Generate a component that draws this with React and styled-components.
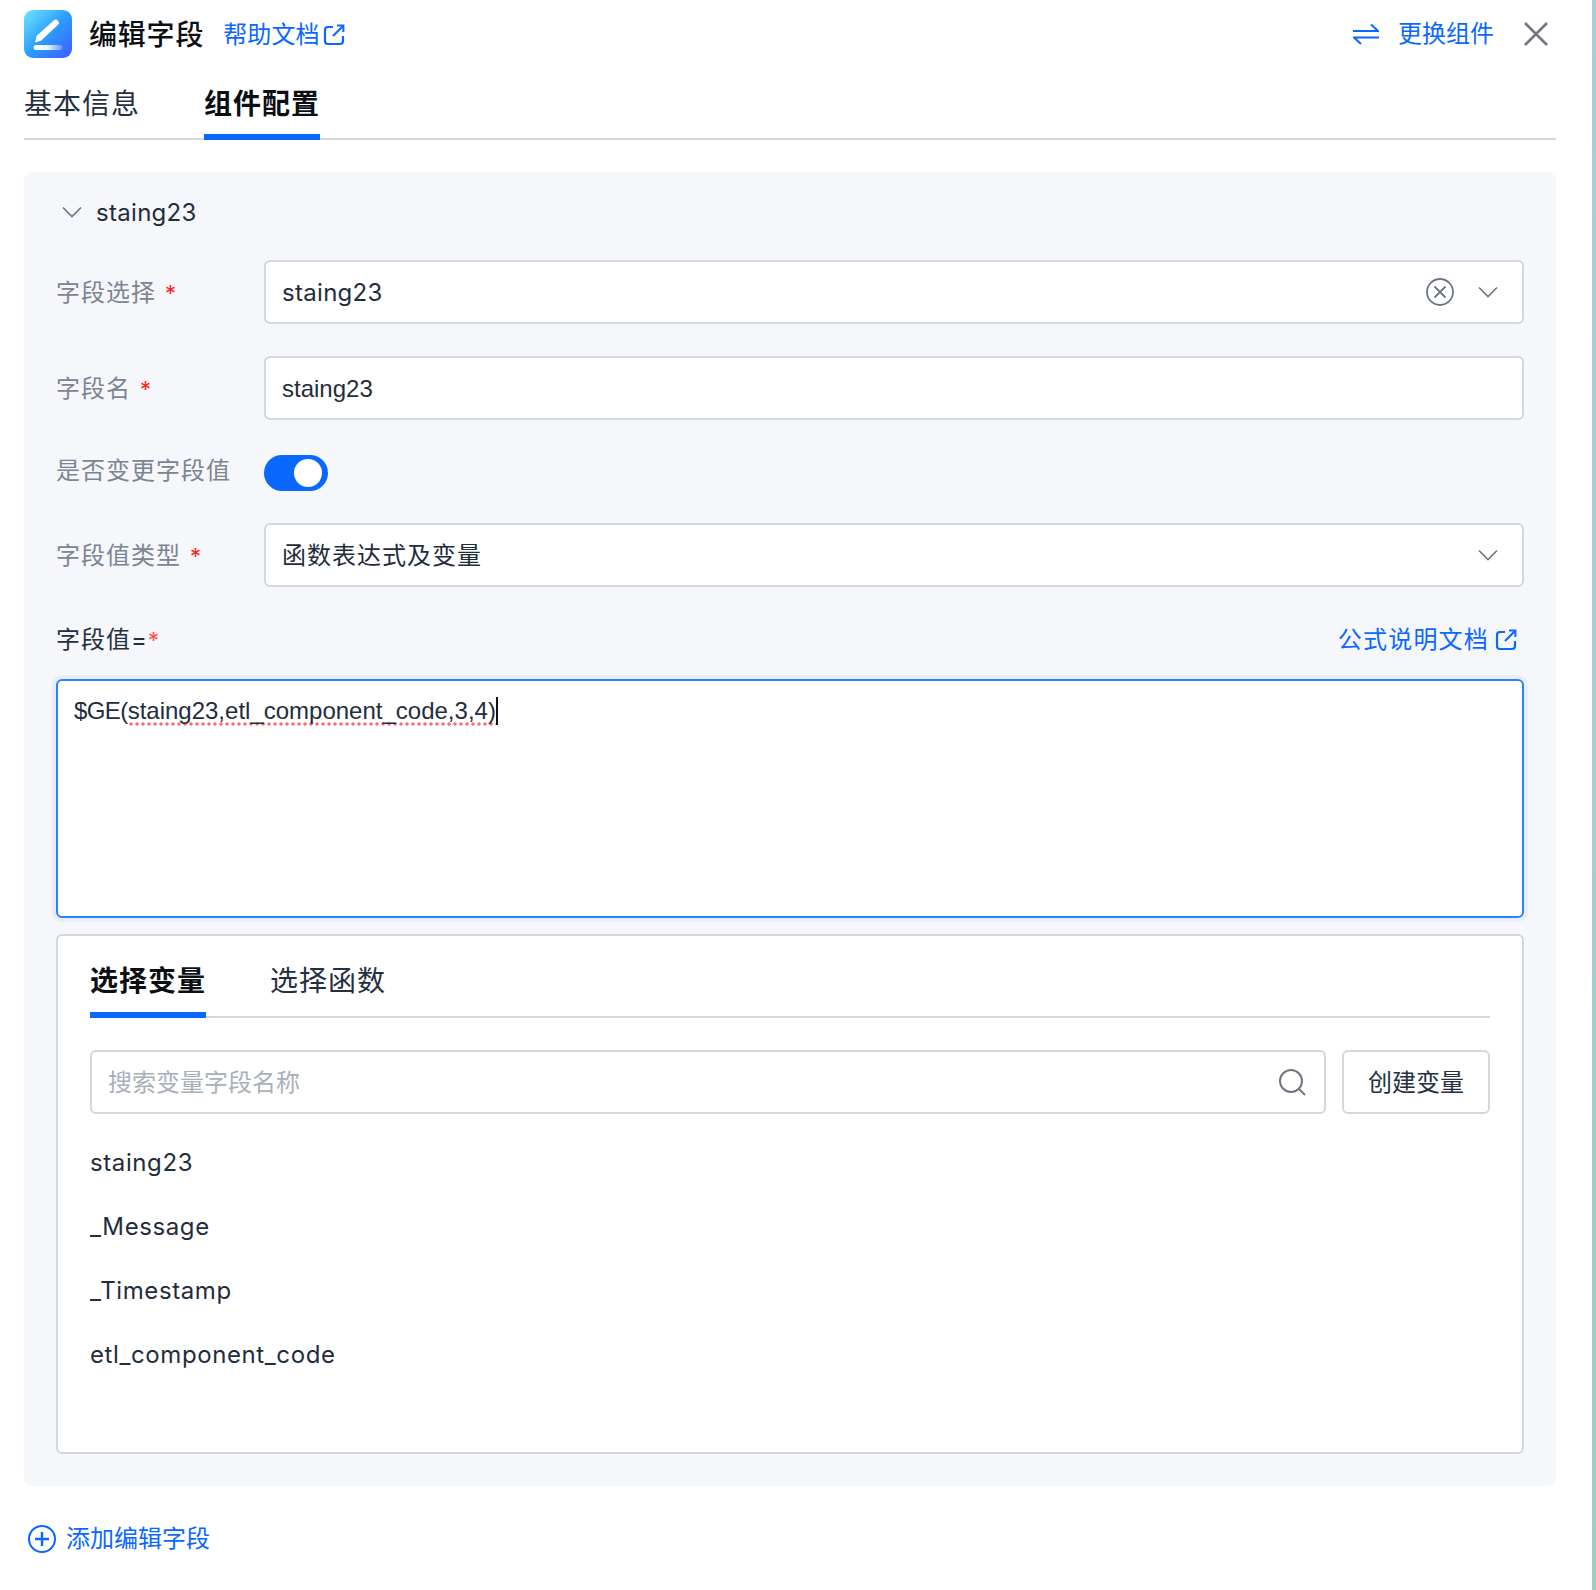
import React from 'react';
import styled, { createGlobalStyle } from 'styled-components';

const Global = createGlobalStyle`
  html, body { margin: 0; padding: 0; background: #fff; }
  * { box-sizing: border-box; }
  body { font-family: Inter, "Noto Sans CJK SC", sans-serif; color: #1f2d3d; }
`;

const BLUE = '#0b68ff';

const Page = styled.div`display: flex; width: 1596px; height: 1590px; overflow: hidden;`;
const Main = styled.div`width: 1592px; padding: 0 36px 0 24px; display: flex; flex-direction: column;`;
const Strip = styled.div`width: 4px; background: linear-gradient(180deg, #a9cdd9 0%, #a3cfd0 50%, #9ccfc2 100%);`;

const Header = styled.header`display: flex; align-items: center; height: 68px;`;
const Title = styled.h1`margin: 2px 0 0 17px; font-size: 28px; line-height: 40px; font-weight: 500; color: #0b0f14; letter-spacing: .8px;`;
const HelpLink = styled.a`display: inline-flex; align-items: center; gap: 3px; margin: 2px 0 0 19px; font-size: 24px; line-height: 34px; color: ${BLUE}; letter-spacing: .1px;`;
const HeaderRight = styled.div`margin-left: auto; padding-right: 8px; display: flex; align-items: center;`;
const SwapLabel = styled.span`font-size: 24px; line-height: 34px; color: ${BLUE}; margin-left: 19px;`;
const CloseBtn = styled.span`display: flex; margin-left: 30px; color: #6f7782;`;

const TabBar = styled.div`display: flex; gap: 64px; height: ${p => p.$h}px; border-bottom: 2px solid #d2d7e0; align-items: flex-start;`;
const Tab = styled.div`
  position: relative;
  height: ${p => p.$h}px;
  padding-top: ${p => p.$pt}px;
  font-size: 28px;
  line-height: 40px;
  letter-spacing: 1px;
  font-weight: ${p => p.$active ? 600 : 400};
  color: ${p => p.$active ? '#0b0f14' : '#24303f'};
  &::after {
    content: '';
    display: ${p => p.$active ? 'block' : 'none'};
    position: absolute;
    left: 0; right: 0; bottom: 0;
    height: 6px;
    background: ${BLUE};
  }
`;

const Panel = styled.section`margin-top: 32px; height: 1314px; background: #f5f7fb; border-radius: 8px; padding: 0 32px;`;
const GroupHead = styled.div`display: flex; align-items: center; height: 88px; padding: 0 0 8px 6px; gap: 14px; font-size: 24px; letter-spacing: .3px; color: #1f2d3d;`;

const Row = styled.div`display: flex; align-items: center; margin-top: ${p => p.$mt || 0}px; height: ${p => p.$h || 64}px;`;
const Label = styled.label`width: 208px; flex: none; margin: ${p => p.$raised ? '0 0 4px' : '2px 0 0'}; font-size: 24px; line-height: 34px; color: #7c8591; letter-spacing: 1px;`;
const Req = styled.span`color: #ff2020; margin-left: 9px; font-size: 22px;`;
const Field = styled.div`
  flex: 1; height: 64px; display: flex; align-items: center; justify-content: space-between;
  background: #fff; border: 2px solid #d2d7e0; border-radius: 6px; padding: 2px 24px 0 16px;
  font-family: ${p => p.$native ? '"Liberation Sans", Arial, sans-serif' : 'inherit'};
  font-size: 24px; line-height: 34px; color: #1f2d3d; letter-spacing: ${p => p.$ls ?? .3}px;
`;
const Icons = styled.div`display: flex; align-items: center; gap: 24px; margin-top: -2px;`;
const SelectArrow = styled.span`display: flex; margin-top: -2px;`;
const Switch = styled.div`width: 64px; height: 36px; border-radius: 18px; background: ${BLUE}; display: flex; align-items: center; justify-content: flex-end; padding-right: 6px;`;
const Knob = styled.div`width: 28px; height: 28px; border-radius: 50%; background: #fff;`;

const ValueHead = styled.div`display: flex; align-items: center; justify-content: space-between; margin-top: 36px; height: 34px;`;
const ValueLabel = styled.span`font-size: 24px; line-height: 34px; color: #24303f; letter-spacing: 1px;`;
const ReqTight = styled.span`color: #ff4d4d; font-size: 22px; letter-spacing: 0;`;
const DocLink = styled.a`display: inline-flex; align-items: center; gap: 6px; font-size: 24px; line-height: 34px; color: ${BLUE}; letter-spacing: 1.2px; margin-right: 7px;`;

const Editor = styled.div`
  margin-top: 22px; height: 239px; background: #fff; border: 2px solid #2d82f7; border-radius: 6px;
  box-shadow: 0 0 0 4px #e8eefa; padding: 13px 16px;
  font-family: "Liberation Sans", Arial, sans-serif; font-size: 24px; line-height: 34px; color: #1f2d3d; letter-spacing: -.6px;
`;
const Squiggle = styled.span`
  letter-spacing: 0;
  padding-bottom: 2px;
  background-image: radial-gradient(circle at center, #ff6a6a 1.5px, transparent 1.7px);
  background-size: 6px 4px;
  background-repeat: repeat-x;
  background-position: left bottom;
`;
const Caret = styled.span`display: inline-block; width: 2px; height: 28px; background: #111; vertical-align: -6px;`;

const VarBox = styled.div`margin-top: 16px; height: 520px; background: #fff; border: 2px solid #d2d7e0; border-radius: 6px; padding: 0 32px;`;
const SearchRow = styled.div`display: flex; gap: 16px; margin-top: 32px;`;
const Search = styled.div`
  flex: 1; height: 64px; display: flex; align-items: center; justify-content: space-between;
  border: 2px solid #d2d7e0; border-radius: 6px; padding: 2px 18px 0 16px;
  font-size: 24px; line-height: 34px; color: #a9b0ba;
`;
const SearchIcon = styled.svg`margin-top: -2px;`;
const CreateBtn = styled.button`
  width: 148px; height: 64px; background: #fff; border: 2px solid #d2d7e0; border-radius: 6px;
  font: 400 24px/34px Inter, "Noto Sans CJK SC", sans-serif; color: #24303f; padding: 2px 0 0;
`;
const VarList = styled.ul`list-style: none; margin: 17px 0 0; padding: 0;`;
const VarItem = styled.li`height: 64px; line-height: 64px; font-size: 24px; color: #1f2d3d; letter-spacing: .6px;`;

const AddRow = styled.div`display: flex; align-items: center; gap: 10px; margin-top: 36px; padding-left: 4px; font-size: 24px; line-height: 34px; color: ${BLUE};`;

const Chevron = ({ w = 20, c = '#6f7782' }) => (
  <svg width={w} height={w * 0.6} viewBox="0 0 20 12" fill="none"><path d="M1 1.5 10 10.5 19 1.5" stroke={c} strokeWidth="1.7" /></svg>
);
const ExtLink = () => (
  <svg width="22" height="22" viewBox="0 0 22 22" fill="none" stroke={BLUE} strokeWidth="2.2">
    <path d="M10 3H5a3 3 0 0 0-3 3v11a3 3 0 0 0 3 3h12a3 3 0 0 0 3-3v-5" />
    <path d="M10 12 20 2" />
    <path d="M14 1.6h6.4V8" strokeWidth="2" />
  </svg>
);

export default function App() {
  return (
    <Page>
      <Global />
      <Main>
        <Header>
          <svg width="48" height="48" viewBox="0 0 48 48">
            <defs>
              <linearGradient id="lg" x1="0" y1="0" x2="1" y2="1">
                <stop offset="0" stopColor="#6fe6ff" />
                <stop offset=".5" stopColor="#2b9dfd" />
                <stop offset="1" stopColor="#3a5cff" />
              </linearGradient>
              <linearGradient id="bar" x1="0" y1="0" x2="1" y2="0">
                <stop offset="0" stopColor="#fff" />
                <stop offset=".5" stopColor="#fff" stopOpacity=".9" />
                <stop offset="1" stopColor="#fff" stopOpacity=".2" />
              </linearGradient>
            </defs>
            <rect width="48" height="48" rx="9" fill="url(#lg)" />
            <path d="M11 32.5l1.5-6.5L29.6 10.6a3 3 0 0 1 4.2 4.4L17 30.8z" fill="#fff" />
            <rect x="9.5" y="35" width="29" height="5" rx="2.5" fill="url(#bar)" />
          </svg>
          <Title>编辑字段</Title>
          <HelpLink>帮助文档<ExtLink /></HelpLink>
          <HeaderRight>
            <svg width="26" height="22" viewBox="0 0 26 22" fill="none" stroke={BLUE} strokeWidth="2">
              <path d="M0 8h25L18 1.5" />
              <path d="M26 14.5H1L8 21" />
            </svg>
            <SwapLabel>更换组件</SwapLabel>
            <CloseBtn>
              <svg width="24" height="24" viewBox="0 0 24 24" fill="none" stroke="currentColor" strokeWidth="2.6"><path d="M1 1l22 22M23 1L1 23" /></svg>
            </CloseBtn>
          </HeaderRight>
        </Header>
        <TabBar $h={72}>
          <Tab $h={72} $pt={16}>基本信息</Tab>
          <Tab $h={72} $pt={16} $active>组件配置</Tab>
        </TabBar>
        <Panel>
          <GroupHead><Chevron />staing23</GroupHead>
          <Row>
            <Label>字段选择<Req>*</Req></Label>
            <Field>
              staing23
              <Icons>
                <svg width="28" height="28" viewBox="0 0 28 28" fill="none" stroke="#6f7782" strokeWidth="1.8">
                  <circle cx="14" cy="14" r="13" /><path d="M8.5 8.5l11 11M19.5 8.5l-11 11" />
                </svg>
                <Chevron />
              </Icons>
            </Field>
          </Row>
          <Row $mt={32}>
            <Label>字段名<Req>*</Req></Label>
            <Field $native $ls={0}>staing23</Field>
          </Row>
          <Row $mt={35} $h={36}>
            <Label $raised>是否变更字段值</Label>
            <Switch><Knob /></Switch>
          </Row>
          <Row $mt={32}>
            <Label>字段值类型<Req>*</Req></Label>
            <Field $ls={1}>函数表达式及变量<SelectArrow><Chevron /></SelectArrow></Field>
          </Row>
          <ValueHead>
            <ValueLabel>字段值=<ReqTight>*</ReqTight></ValueLabel>
            <DocLink>公式说明文档<ExtLink /></DocLink>
          </ValueHead>
          <Editor>$GE(<Squiggle>staing23,etl_component_code,3,4)</Squiggle><Caret /></Editor>
          <VarBox>
            <TabBar $h={82}>
              <Tab $h={82} $pt={25} $active>选择变量</Tab>
              <Tab $h={82} $pt={25}>选择函数</Tab>
            </TabBar>
            <SearchRow>
              <Search>
                搜索变量字段名称
                <SearchIcon width="28" height="28" viewBox="0 0 28 28" fill="none" stroke="#6f7782" strokeWidth="2">
                  <circle cx="13" cy="13" r="11" /><path d="M21 21l6 6" />
                </SearchIcon>
              </Search>
              <CreateBtn>创建变量</CreateBtn>
            </SearchRow>
            <VarList>
              <VarItem>staing23</VarItem>
              <VarItem>_Message</VarItem>
              <VarItem>_Timestamp</VarItem>
              <VarItem>etl_component_code</VarItem>
            </VarList>
          </VarBox>
        </Panel>
        <AddRow>
          <svg width="28" height="28" viewBox="0 0 28 28" fill="none" stroke={BLUE}>
            <circle cx="14" cy="14" r="13" strokeWidth="2" /><path d="M7 14h14M14 7v14" strokeWidth="2.4" />
          </svg>
          添加编辑字段
        </AddRow>
      </Main>
      <Strip />
    </Page>
  );
}
